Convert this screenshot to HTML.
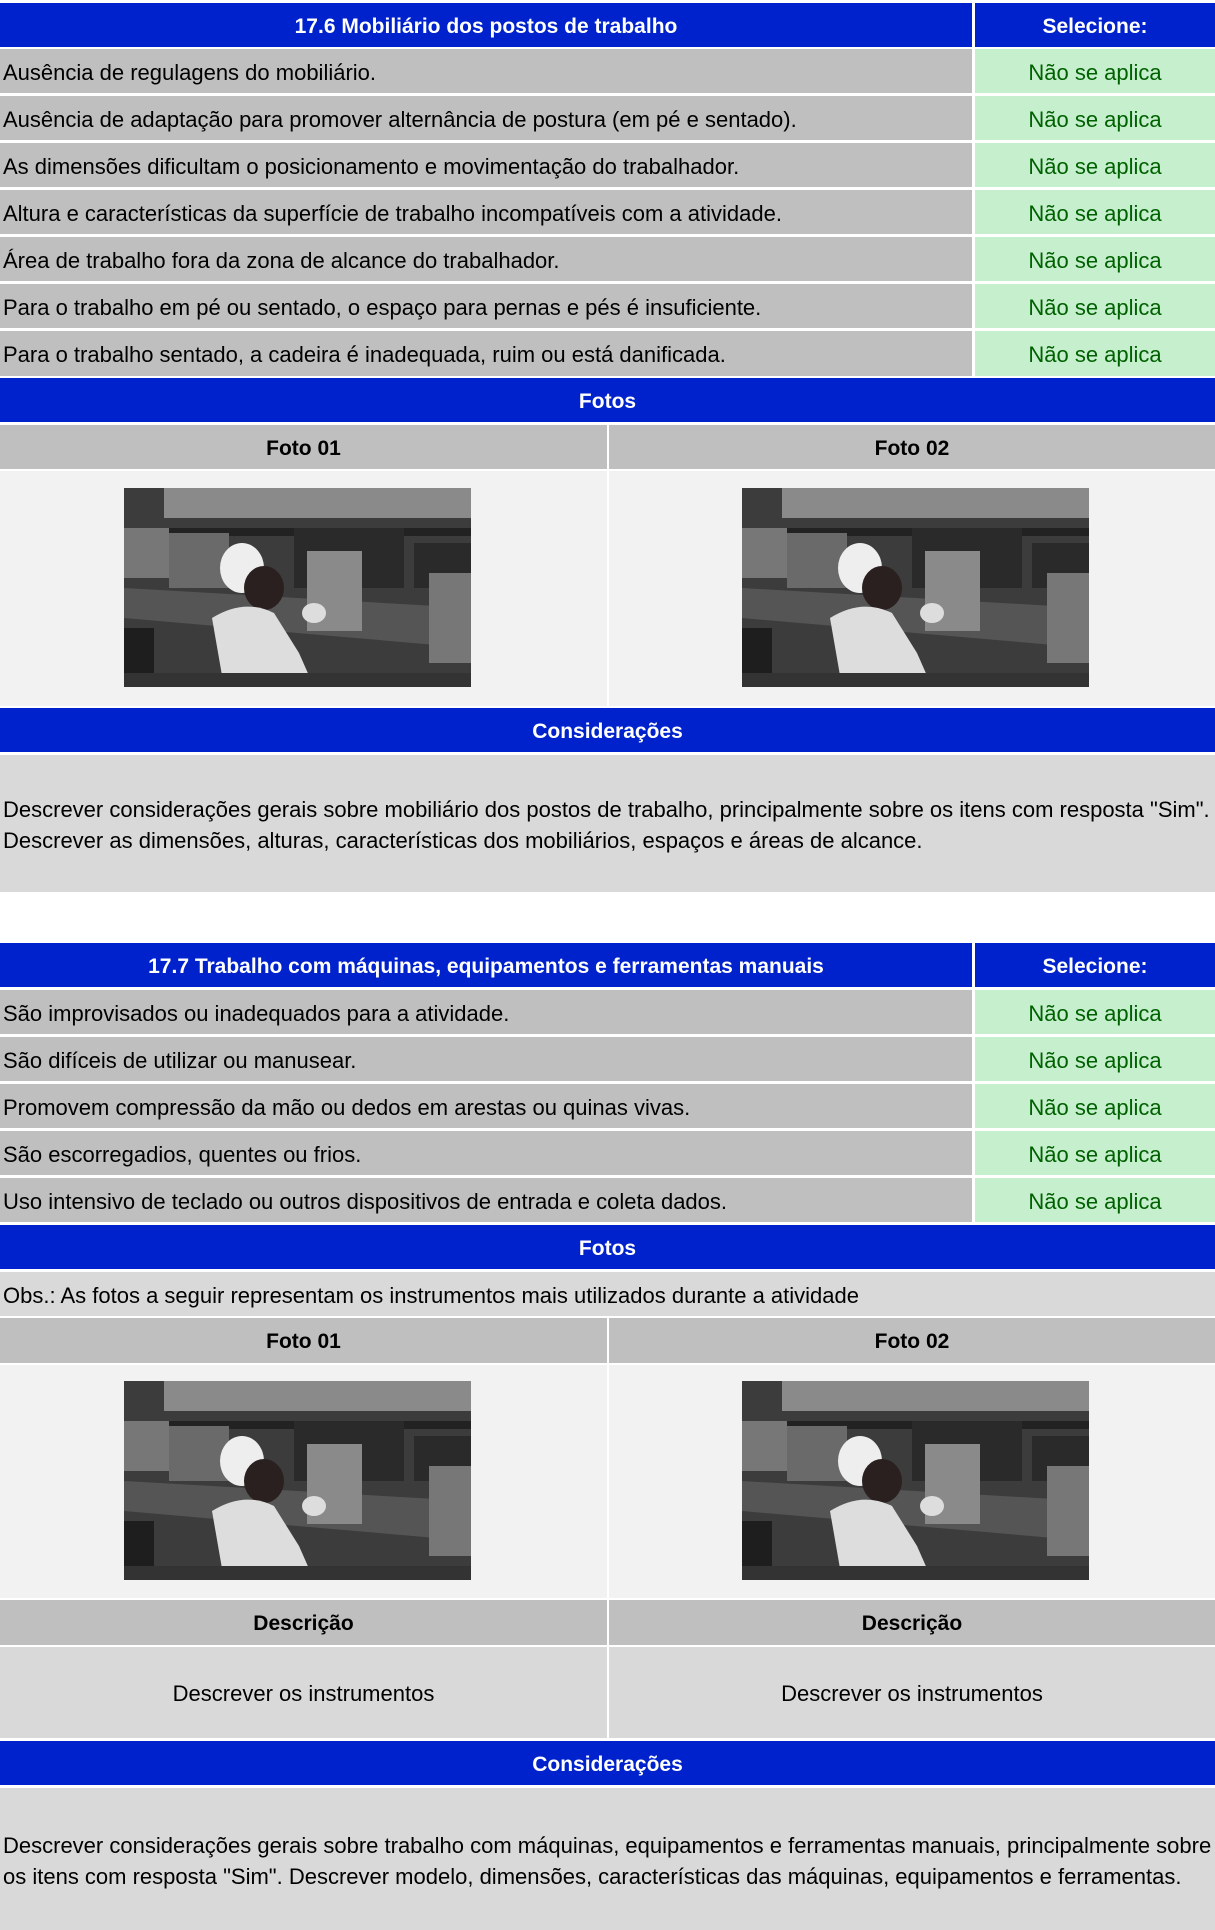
<!DOCTYPE html>
<html><head><meta charset="utf-8"><style>
*{margin:0;padding:0;box-sizing:border-box}
body{width:1215px;height:1930px;background:#fff;font-family:"Liberation Sans",Arial,sans-serif;font-size:22px;color:#000;position:relative;overflow:hidden}
.b{position:absolute;display:flex;align-items:center;white-space:nowrap;padding-top:3px}
.blue{background:#0022cc;color:#fff;font-weight:bold;justify-content:center;font-size:21px}
.g{background:#bfbfbf;padding-left:3px}
.gc{background:#bfbfbf;font-weight:bold;justify-content:center;font-size:21px}
.n{background:#c6efce;color:#006100;justify-content:center}
.p{background:#f2f2f2}
.d{background:#d9d9d9}
svg{position:absolute}
</style></head><body>
<svg width="0" height="0" style="position:absolute"><defs>
<symbol id="ph" viewBox="0 0 347 199">
<rect width="347" height="199" fill="#3c3c3c"/>
<rect x="40" y="0" width="307" height="30" fill="#8a8a8a"/>
<polygon points="0,100 347,120 347,160 0,130" fill="#555"/>
<rect x="0" y="40" width="347" height="8" fill="#222"/>
<rect x="170" y="40" width="110" height="60" fill="#2a2a2a"/>
<rect x="290" y="55" width="57" height="45" fill="#2a2a2a"/>
<rect x="0" y="40" width="45" height="50" fill="#777"/>
<rect x="45" y="45" width="60" height="55" fill="#6a6a6a"/>
<rect x="183" y="63" width="55" height="80" fill="#8a8a8a"/>
<rect x="305" y="85" width="42" height="90" fill="#777"/>
<rect x="0" y="140" width="30" height="59" fill="#1e1e1e"/>
<ellipse cx="118" cy="80" rx="22" ry="25" fill="#eee"/>
<ellipse cx="140" cy="100" rx="20" ry="22" fill="#2a2020"/>
<path d="M88 130 Q120 110 150 125 L175 165 L190 199 L100 199 Z" fill="#ddd"/>
<ellipse cx="190" cy="125" rx="12" ry="10" fill="#ddd"/>
<rect x="0" y="185" width="347" height="14" fill="#333"/>
</symbol></defs></svg>

<div class="b blue" style="left:0;top:3px;width:972px;height:44px">17.6 Mobiliário dos postos de trabalho</div>
<div class="b blue" style="left:975px;top:3px;width:240px;height:44px">Selecione:</div>

<div class="b g" style="left:0;top:49px;width:972px;height:44px">Ausência de regulagens do mobiliário.</div>
<div class="b n" style="left:975px;top:49px;width:240px;height:44px">Não se aplica</div>
<div class="b g" style="left:0;top:96px;width:972px;height:44px">Ausência de adaptação para promover alternância de postura (em pé e sentado).</div>
<div class="b n" style="left:975px;top:96px;width:240px;height:44px">Não se aplica</div>
<div class="b g" style="left:0;top:143px;width:972px;height:44px">As dimensões dificultam o posicionamento e movimentação do trabalhador.</div>
<div class="b n" style="left:975px;top:143px;width:240px;height:44px">Não se aplica</div>
<div class="b g" style="left:0;top:190px;width:972px;height:44px">Altura e características da superfície de trabalho incompatíveis com a atividade.</div>
<div class="b n" style="left:975px;top:190px;width:240px;height:44px">Não se aplica</div>
<div class="b g" style="left:0;top:237px;width:972px;height:44px">Área de trabalho fora da zona de alcance do trabalhador.</div>
<div class="b n" style="left:975px;top:237px;width:240px;height:44px">Não se aplica</div>
<div class="b g" style="left:0;top:284px;width:972px;height:44px">Para o trabalho em pé ou sentado, o espaço para pernas e pés é insuficiente.</div>
<div class="b n" style="left:975px;top:284px;width:240px;height:44px">Não se aplica</div>
<div class="b g" style="left:0;top:331px;width:972px;height:45px">Para o trabalho sentado, a cadeira é inadequada, ruim ou está danificada.</div>
<div class="b n" style="left:975px;top:331px;width:240px;height:45px">Não se aplica</div>

<div class="b blue" style="left:0;top:378px;width:1215px;height:44px">Fotos</div>
<div class="b gc" style="left:0;top:425px;width:607px;height:44px">Foto 01</div>
<div class="b gc" style="left:609px;top:425px;width:606px;height:44px">Foto 02</div>
<div class="b p" style="left:0;top:471px;width:607px;height:235px"></div>
<div class="b p" style="left:609px;top:471px;width:606px;height:235px"></div>
<svg style="left:124px;top:488px" width="347" height="199"><use href="#ph"/></svg>
<svg style="left:742px;top:488px" width="347" height="199"><use href="#ph"/></svg>

<div class="b blue" style="left:0;top:708px;width:1215px;height:44px">Considerações</div>
<div class="b d" style="left:0;top:755px;width:1215px;height:137px;white-space:normal;padding-left:3px;line-height:31px">Descrever considerações gerais sobre mobiliário dos postos de trabalho, principalmente sobre os itens com resposta "Sim".<br>Descrever as dimensões, alturas, características dos mobiliários, espaços e áreas de alcance.</div>

<div class="b blue" style="left:0;top:943px;width:972px;height:44px">17.7 Trabalho com máquinas, equipamentos e ferramentas manuais</div>
<div class="b blue" style="left:975px;top:943px;width:240px;height:44px">Selecione:</div>
<div class="b g" style="left:0;top:990px;width:972px;height:44px">São improvisados ou inadequados para a atividade.</div>
<div class="b n" style="left:975px;top:990px;width:240px;height:44px">Não se aplica</div>
<div class="b g" style="left:0;top:1037px;width:972px;height:44px">São difíceis de utilizar ou manusear.</div>
<div class="b n" style="left:975px;top:1037px;width:240px;height:44px">Não se aplica</div>
<div class="b g" style="left:0;top:1084px;width:972px;height:44px">Promovem compressão da mão ou dedos em arestas ou quinas vivas.</div>
<div class="b n" style="left:975px;top:1084px;width:240px;height:44px">Não se aplica</div>
<div class="b g" style="left:0;top:1131px;width:972px;height:44px">São escorregadios, quentes ou frios.</div>
<div class="b n" style="left:975px;top:1131px;width:240px;height:44px">Não se aplica</div>
<div class="b g" style="left:0;top:1178px;width:972px;height:44px">Uso intensivo de teclado ou outros dispositivos de entrada e coleta dados.</div>
<div class="b n" style="left:975px;top:1178px;width:240px;height:44px">Não se aplica</div>

<div class="b blue" style="left:0;top:1225px;width:1215px;height:44px">Fotos</div>
<div class="b d" style="left:0;top:1272px;width:1215px;height:44px;padding-left:3px">Obs.: As fotos a seguir representam os instrumentos mais utilizados durante a atividade</div>
<div class="b gc" style="left:0;top:1318px;width:607px;height:45px">Foto 01</div>
<div class="b gc" style="left:609px;top:1318px;width:606px;height:45px">Foto 02</div>
<div class="b p" style="left:0;top:1365px;width:607px;height:233px"></div>
<div class="b p" style="left:609px;top:1365px;width:606px;height:233px"></div>
<svg style="left:124px;top:1381px" width="347" height="199"><use href="#ph"/></svg>
<svg style="left:742px;top:1381px" width="347" height="199"><use href="#ph"/></svg>

<div class="b gc" style="left:0;top:1600px;width:607px;height:45px">Descrição</div>
<div class="b gc" style="left:609px;top:1600px;width:606px;height:45px">Descrição</div>
<div class="b d" style="left:0;top:1647px;width:607px;height:91px;justify-content:center">Descrever os instrumentos</div>
<div class="b d" style="left:609px;top:1647px;width:606px;height:91px;justify-content:center">Descrever os instrumentos</div>

<div class="b blue" style="left:0;top:1741px;width:1215px;height:44px">Considerações</div>
<div class="b d" style="left:0;top:1788px;width:1215px;height:142px;white-space:normal;padding-left:3px;line-height:31px">Descrever considerações gerais sobre trabalho com máquinas, equipamentos e ferramentas manuais, principalmente sobre<br>os itens com resposta "Sim". Descrever modelo, dimensões, características das máquinas, equipamentos e ferramentas.</div>
</body></html>
